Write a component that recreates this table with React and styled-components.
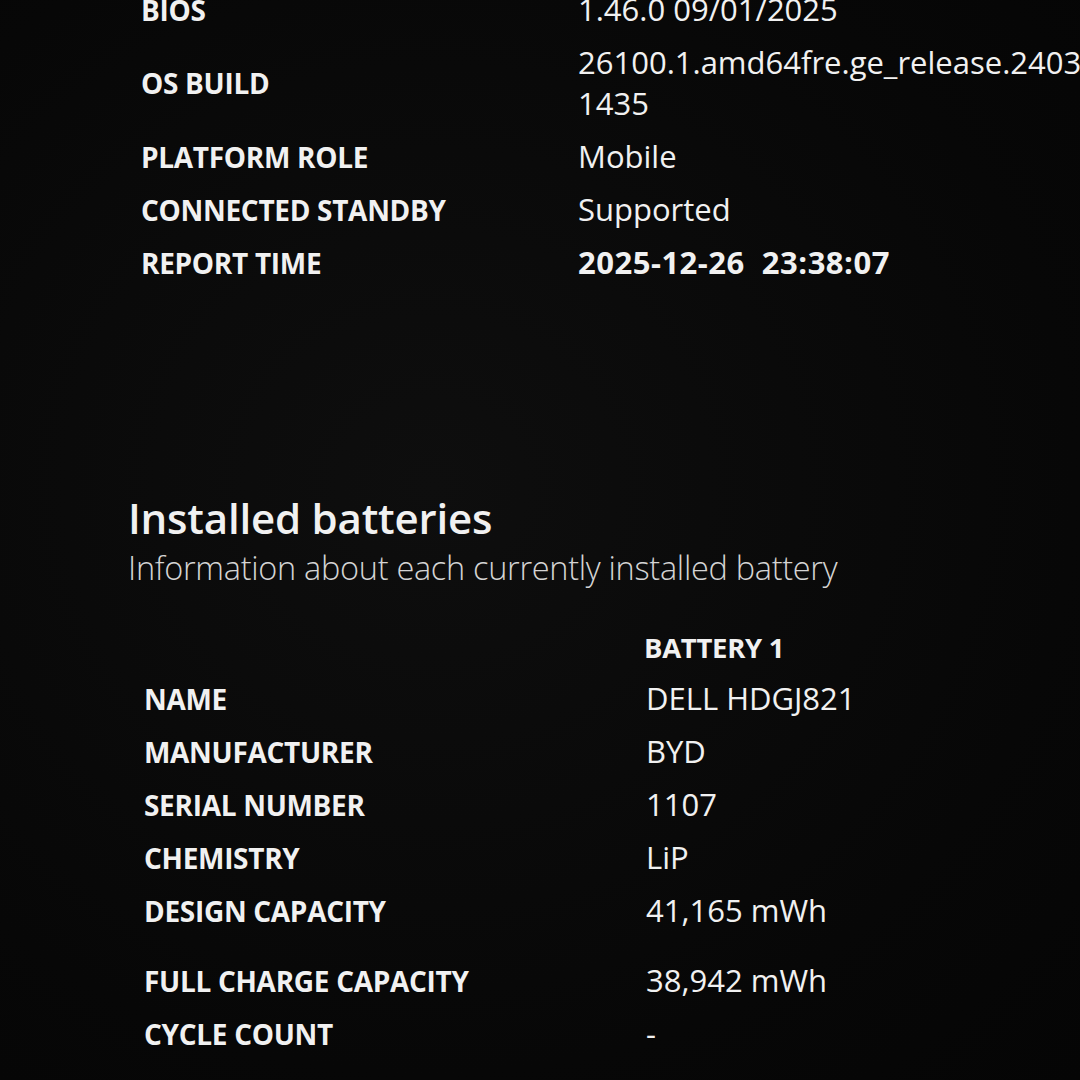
import styled, { createGlobalStyle } from 'styled-components';

const GlobalStyle = createGlobalStyle`
  html, body {
    margin: 0;
    padding: 0;
    background: #090909;
  }
  body {
    font-family: 'Open Sans', 'Noto Sans', sans-serif;
    color: #f1f1f1;
  }
`;

const Viewport = styled.div`
  width: 1080px;
  height: 1080px;
  overflow: hidden;
  background: radial-gradient(ellipse at 40% 45%, #0e0e0e 0%, #070707 70%, #050505 100%);
`;

// scrolled a little, so the BIOS row sits under the top edge
const Report = styled.div`
  margin-top: -17px;
  padding-left: 128px;
`;

const InfoTable = styled.div`
  display: grid;
  grid-template-columns: ${(p) => p.$labelWidth}px auto;
  padding-left: ${(p) => p.$indent}px;
`;

const Label = styled.div`
  display: flex;
  align-items: center;
  font-size: 28px;
  font-weight: 700;
  letter-spacing: -0.3px;
  white-space: nowrap;
  padding: 6px 0;
  margin-top: ${(p) => p.$gap || 0}px;
`;

const Value = styled.div`
  display: flex;
  flex-direction: column;
  justify-content: center;
  font-size: 31px;
  font-weight: ${(p) => (p.$bold ? 700 : 400)};
  line-height: 41px;
  letter-spacing: ${(p) => (p.$bold ? '0.5px' : '0')};
  white-space: nowrap;
  padding: 6px 0;
  margin-top: ${(p) => p.$gap || 0}px;
`;

const ColumnHead = styled.div`
  font-size: 27.5px;
  font-weight: 700;
  letter-spacing: -0.3px;
  padding: 6px 0;
  margin-left: -2px;
`;

const Section = styled.section`
  margin-top: ${(p) => p.$top}px;
`;

const Heading = styled.h2`
  margin: 0;
  font-size: 42px;
  font-weight: 600;
  line-height: 48px;
  letter-spacing: -0.2px;
`;

const Subtitle = styled.p`
  margin: 6px 0 0;
  font-size: 32.5px;
  font-weight: 300;
  line-height: 40px;
  color: #d4d4d4;
  letter-spacing: -0.3px;
`;

const systemRows = [
  { label: 'BIOS', value: ['1.46.0 09/01/2025'] },
  { label: 'OS BUILD', value: ['26100.1.amd64fre.ge_release.240331', '1435'] },
  { label: 'PLATFORM ROLE', value: ['Mobile'] },
  { label: 'CONNECTED STANDBY', value: ['Supported'] },
  { label: 'REPORT TIME', value: ['2025-12-26\u00a0\u00a023:38:07'], bold: true },
];

const batteryRows = [
  { label: 'NAME', value: 'DELL HDGJ821' },
  { label: 'MANUFACTURER', value: 'BYD' },
  { label: 'SERIAL NUMBER', value: '1107' },
  { label: 'CHEMISTRY', value: 'LiP' },
  { label: 'DESIGN CAPACITY', value: '41,165 mWh' },
  { label: 'FULL CHARGE CAPACITY', value: '38,942 mWh', gap: 17 },
  { label: 'CYCLE COUNT', value: '-' },
];

export default function App() {
  return (
    <Viewport>
      <GlobalStyle />
      <Report>
        <InfoTable $labelWidth={437} $indent={13}>
          {systemRows.map((row) => (
            <>
              <Label key={row.label + 'l'}>{row.label}</Label>
              <Value key={row.label + 'v'} $bold={row.bold}>
                {row.value.map((line) => (
                  <span key={line}>{line}</span>
                ))}
              </Value>
            </>
          ))}
        </InfoTable>

        <Section $top={205}>
          <Heading>Installed batteries</Heading>
          <Subtitle>Information about each currently installed battery</Subtitle>
        </Section>

        <Section $top={35}>
          <InfoTable $labelWidth={502} $indent={16}>
            <div />
            <ColumnHead>BATTERY 1</ColumnHead>
            {batteryRows.map((row) => (
              <>
                <Label key={row.label + 'l'} $gap={row.gap}>{row.label}</Label>
                <Value key={row.label + 'v'} $gap={row.gap}>{row.value}</Value>
              </>
            ))}
          </InfoTable>
        </Section>
      </Report>
    </Viewport>
  );
}
